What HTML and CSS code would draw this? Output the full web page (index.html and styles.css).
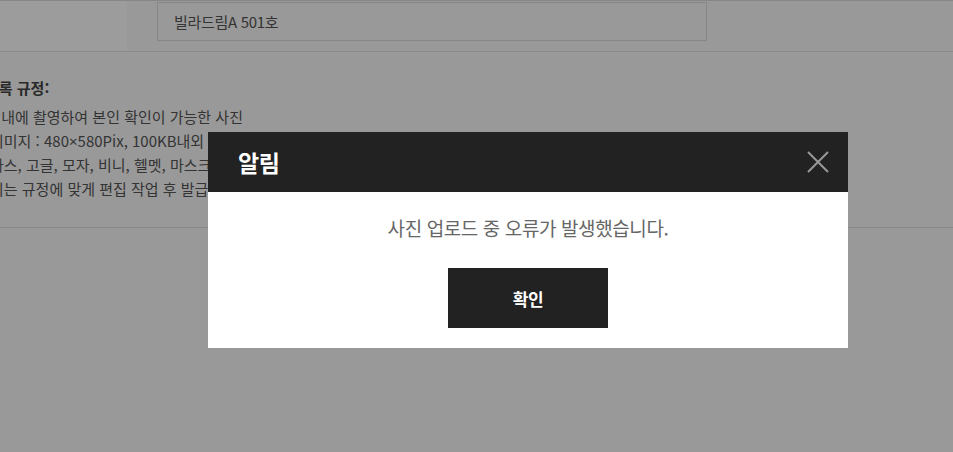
FILE: index.html
```html
<!DOCTYPE html>
<html lang="ko">
<head>
<meta charset="utf-8">
<title>알림</title>
<link rel="stylesheet" href="styles.css">
</head>
<body>
<div class="page">
  <div class="row">
    <div class="th"></div>
    <div class="td"><div class="input">빌라드림A 501호</div></div>
  </div>
  <div class="rules">
    <p class="rules-title">등록 규정:</p>
    <ul class="rules-list">
      <li><span class="lead">6개월</span> 내에 촬영하여 본인 확인이 가능한 사진</li>
      <li>이미지 : 480<span class="times">×</span>580Pix, 100KB내외 JPG 파일</li>
      <li>라스, 고글, 모자, 비니, 헬멧, 마스크 착용 사진 불가</li>
      <li>되는 규정에 맞게 편집 작업 후 발급</li>
    </ul>
  </div>
</div>
<div class="overlay">
  <div class="modal">
    <div class="modal-head">
      <h2 class="modal-title">알림</h2>
      <button class="modal-close" aria-label="닫기">
        <svg width="22" height="22" viewBox="0 0 22 22"><path d="M1 1L21 21M21 1L1 21" stroke="#999" stroke-width="2" fill="none"/></svg>
      </button>
    </div>
    <div class="modal-body">
      <p class="modal-msg">사진 업로드 중 오류가 발생했습니다.</p>
      <button class="modal-btn">확인</button>
    </div>
  </div>
</div>
</body>
</html>
```
FILE: styles.css
```css
* { box-sizing: border-box; }
html, body { margin: 0; padding: 0; }
body {
  width: 953px;
  height: 452px;
  overflow: hidden;
  background: #fafafa;
  font-family: "Noto Sans CJK KR", "Noto Sans", sans-serif;
  color: #555;
}
.page { width: 953px; }
.row {
  display: flex;
  height: 52px;
  border-top: 1px solid #ddd;
  border-bottom: 1px solid #e4e4e4;
}
.th { width: 127px; background: #fff; }
.td { padding: 1px 0 0 30px; }
.input {
  width: 550px;
  height: 39px;
  border: 1px solid #ddd;
  background: #fafafa;
  padding-left: 16px;
  font-size: 15px;
  line-height: 37px;
  letter-spacing: -0.3px;
  color: #555;
}
.rules {
  margin-left: -10px;
  padding: 24px 0 26px;
  border-bottom: 1px solid #ddd;
  font-size: 15px;
  letter-spacing: 0;
}
.rules-title {
  margin: 0 0 5px -5px;
  line-height: 24px;
  font-weight: 700;
  color: #444;
}
.rules-list { margin: 0; padding: 0; list-style: none; }
.rules-list li { line-height: 24px; white-space: nowrap; }
.lead { margin-left: -29px; }
.times { font-family: "Noto Sans", sans-serif; }

.overlay {
  position: fixed;
  inset: 0;
  background: rgba(0, 0, 0, 0.39);
}
.modal {
  width: 640px;
  margin: 132px 0 0 208px;
  background: #fff;
}
.modal-head {
  height: 60px;
  background: #222;
  display: flex;
  align-items: center;
  justify-content: space-between;
  padding: 0 19px 0 30px;
}
.modal-title {
  margin: 0;
  font-size: 23px;
  font-weight: 700;
  letter-spacing: -0.5px;
  color: #fff;
  line-height: 1;
}
.modal-close {
  border: 0;
  padding: 0;
  background: none;
  width: 22px;
  height: 22px;
  display: block;
}
.modal-close svg { display: block; }
.modal-body {
  padding: 24px 0 20px;
  display: flex;
  flex-direction: column;
  align-items: center;
}
.modal-msg {
  margin: 0 0 28px;
  font-size: 19px;
  line-height: 24px;
  letter-spacing: -0.4px;
  color: #666;
}
.modal-btn {
  width: 160px;
  height: 60px;
  border: 0;
  background: #222;
  color: #fff;
  font-family: inherit;
  font-size: 17px;
  font-weight: 700;
  letter-spacing: -0.5px;
}
```
